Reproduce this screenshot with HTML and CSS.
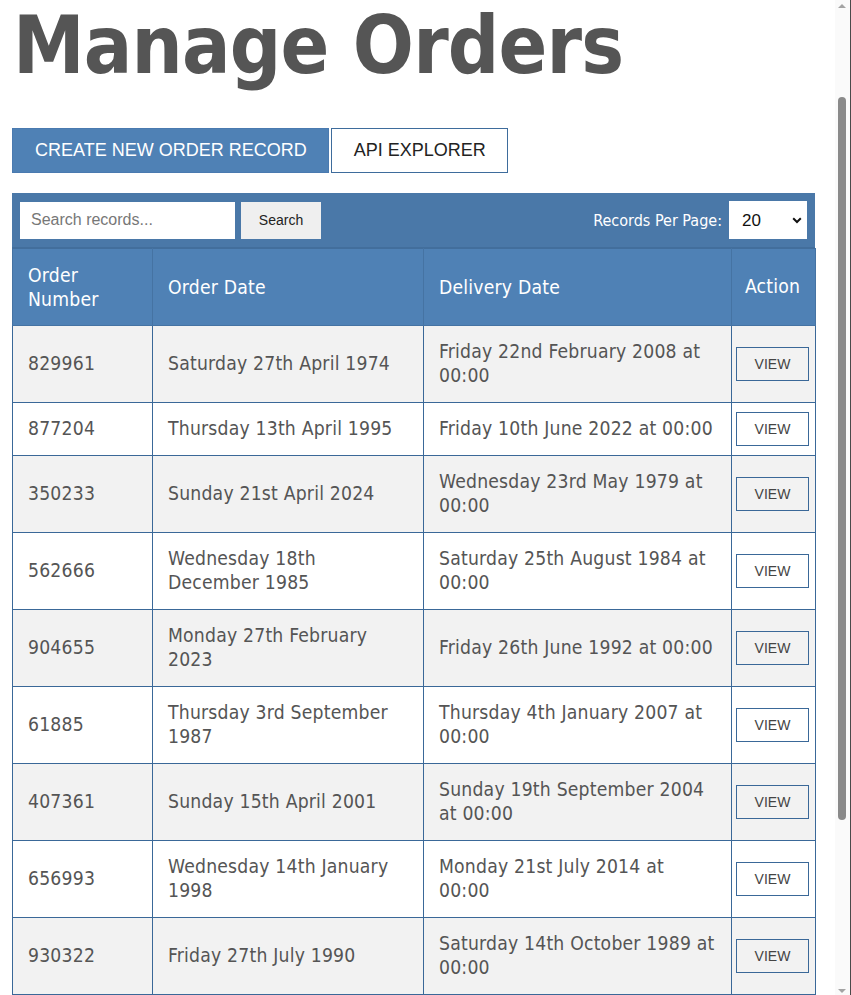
FILE: index.html
```html
<!DOCTYPE html>
<html lang="en">
<head>
<meta charset="utf-8">
<title>Manage Orders</title>
<link rel="stylesheet" href="styles.css">
</head>
<body>
<main class="page">
  <h1 class="title">Manage Orders</h1>
  <div class="actions">
    <button class="btn btn-primary">CREATE NEW ORDER RECORD</button>
    <button class="btn btn-outline">API EXPLORER</button>
  </div>
  <section class="records">
    <div class="toolbar">
      <div class="search">
        <input class="search-input" type="text" placeholder="Search records...">
        <button class="search-btn">Search</button>
      </div>
      <div class="per-page">
        <label class="per-page-label" for="pp">Records Per Page:</label>
        <span class="select-wrap">
          <select id="pp" class="per-page-select">
            <option>10</option>
            <option selected>20</option>
            <option>50</option>
          </select>
          <svg class="chev" width="10" height="7" viewBox="0 0 10 7"><path d="M1.2 1.3 L5 5 L8.8 1.3" fill="none" stroke="#111" stroke-width="2"/></svg>
        </span>
      </div>
    </div>
    <table class="orders">
      <colgroup>
        <col class="c-num"><col class="c-odate"><col class="c-ddate"><col class="c-act">
      </colgroup>
      <thead>
        <tr><th>Order Number</th><th>Order Date</th><th>Delivery Date</th><th class="act">Action</th></tr>
      </thead>
      <tbody>
        <tr><td>829961</td><td>Saturday 27th April 1974</td><td>Friday 22nd February 2008 at 00:00</td><td class="act"><button class="view">VIEW</button></td></tr>
        <tr><td>877204</td><td>Thursday 13th April 1995</td><td>Friday 10th June 2022 at 00:00</td><td class="act"><button class="view">VIEW</button></td></tr>
        <tr><td>350233</td><td>Sunday 21st April 2024</td><td>Wednesday 23rd May 1979 at 00:00</td><td class="act"><button class="view">VIEW</button></td></tr>
        <tr><td>562666</td><td>Wednesday 18th December 1985</td><td>Saturday 25th August 1984 at 00:00</td><td class="act"><button class="view">VIEW</button></td></tr>
        <tr><td>904655</td><td>Monday 27th February 2023</td><td>Friday 26th June 1992 at 00:00</td><td class="act"><button class="view">VIEW</button></td></tr>
        <tr><td>61885</td><td>Thursday 3rd September 1987</td><td>Thursday 4th January 2007 at 00:00</td><td class="act"><button class="view">VIEW</button></td></tr>
        <tr><td>407361</td><td>Sunday 15th April 2001</td><td>Sunday 19th September 2004 at 00:00</td><td class="act"><button class="view">VIEW</button></td></tr>
        <tr><td>656993</td><td>Wednesday 14th January 1998</td><td>Monday 21st July 2014 at 00:00</td><td class="act"><button class="view">VIEW</button></td></tr>
        <tr><td>930322</td><td>Friday 27th July 1990</td><td>Saturday 14th October 1989 at 00:00</td><td class="act"><button class="view">VIEW</button></td></tr>
        <tr><td>118470</td><td>Tuesday 5th March 2019</td><td>Monday 9th November 1981 at 00:00</td><td class="act"><button class="view">VIEW</button></td></tr>
        <tr><td>273915</td><td>Friday 2nd October 1998</td><td>Sunday 17th May 2015 at 00:00</td><td class="act"><button class="view">VIEW</button></td></tr>
        <tr><td>745028</td><td>Monday 14th June 1976</td><td>Tuesday 3rd April 2012 at 00:00</td><td class="act"><button class="view">VIEW</button></td></tr>
      </tbody>
    </table>
  </section>
</main>
<div class="scrollbar" aria-hidden="true">
  <span class="sb-arrow sb-up"></span>
  <span class="sb-thumb"></span>
  <span class="sb-arrow sb-down"></span>
</div>
</body>
</html>
```

FILE: styles.css
```css
html, body {
  margin: 0;
  padding: 0;
  background: #ffffff;
}

.page {
  padding: 0 12px 40px 12px;
  font-family: "DejaVu Sans", sans-serif;
  font-stretch: condensed;
  color: #555555;
}

.title {
  margin: -1px 0 0 1px;
  font-size: 80px;
  line-height: 93px;
  letter-spacing: -0.8px;
  font-weight: bold;
  color: #555555;
}

.actions {
  display: flex;
  gap: 2px;
  margin-top: 36px;
}

.btn {
  height: 45px;
  padding: 0 21px 0 22px;
  font-family: "Liberation Sans", Arial, sans-serif;
  font-size: 18px;
  border: 1px solid #4a7ab0;
  cursor: pointer;
}

.btn-primary {
  background: #4f81b5;
  color: #ffffff;
}

.btn-outline {
  background: #ffffff;
  color: #222222;
  border-color: #3e6c9c;
}

.records {
  margin-top: 20px;
  width: 803px;
}

.toolbar {
  display: flex;
  justify-content: space-between;
  align-items: center;
  background: #4a78a8;
  padding: 8px;
  height: 38px;
  border-bottom: 1px solid #426e9c;
}

.search {
  display: flex;
  gap: 6px;
}

.search-input {
  width: 215px;
  height: 37px;
  box-sizing: border-box;
  border: none;
  padding: 0 11px;
  font-family: "Liberation Sans", Arial, sans-serif;
  font-size: 16px;
  color: #333;
}

.search-input::placeholder {
  color: #777;
}

.search-btn {
  width: 80px;
  height: 37px;
  border: none;
  background: #efefef;
  font-family: "Liberation Sans", Arial, sans-serif;
  font-size: 14px;
  color: #222;
}

.per-page {
  display: flex;
  align-items: center;
  gap: 7px;
}

.per-page-label {
  color: #ffffff;
  font-size: 16px;
}

.select-wrap {
  position: relative;
  display: inline-block;
}

.per-page-select {
  appearance: none;
  -webkit-appearance: none;
  width: 78px;
  height: 38px;
  border: none;
  background: #ffffff;
  padding: 0 0 0 13px;
  font-family: "Liberation Sans", Arial, sans-serif;
  font-size: 17px;
  color: #111;
  display: block;
}

.chev {
  position: absolute;
  right: 5px;
  top: 16px;
  pointer-events: none;
}

.orders {
  border-collapse: collapse;
  table-layout: fixed;
  width: 803px;
  font-size: 19.2px;
  line-height: 24px;
  letter-spacing: 0.2px;
}

.c-num { width: 140px; }
.c-odate { width: 271px; }
.c-ddate { width: 308px; }
.c-act { width: 84px; }

.orders th,
.orders td {
  border: 1px solid #3a6898;
  padding: 14px 15px;
  text-align: left;
  vertical-align: middle;
}

.orders th {
  background: #4f81b5;
  color: #ffffff;
  font-weight: normal;
  border-color: #4573a3;
  border-top-color: #426e9c;
  padding-top: 15px;
  padding-bottom: 13px;
}

.orders td {
  color: #555555;
}

.orders tbody tr:nth-child(odd) td {
  background: #f2f2f2;
}

.orders tbody tr:nth-child(even) td {
  background: #ffffff;
}

.orders .act {
  text-align: center;
  padding: 9px 5px 9px 3px;
}

.view {
  width: 73px;
  height: 34px;
  border: 1px solid #3a6898;
  background: transparent;
  font-family: "Liberation Sans", Arial, sans-serif;
  font-size: 14px;
  letter-spacing: 0;
  color: #444;
  vertical-align: middle;
  cursor: pointer;
}

/* decorative window scrollbar overlay */
.scrollbar {
  position: fixed;
  top: 0;
  right: 0;
  width: 15px;
  height: 100vh;
  background: #fafafa;
  border-right: 1px solid #4a4a4a;
}

.sb-thumb {
  position: absolute;
  left: 3px;
  top: 97px;
  width: 8px;
  height: 723px;
  border-radius: 4px;
  background: #8a8a8a;
}

.sb-arrow {
  position: absolute;
  left: 3px;
  width: 0;
  height: 0;
  border-left: 4px solid transparent;
  border-right: 4px solid transparent;
}

.sb-up {
  top: 4px;
  border-bottom: 4px solid #a3a3a3;
}

.sb-down {
  bottom: 2px;
  border-top: 4px solid #a3a3a3;
}
```
